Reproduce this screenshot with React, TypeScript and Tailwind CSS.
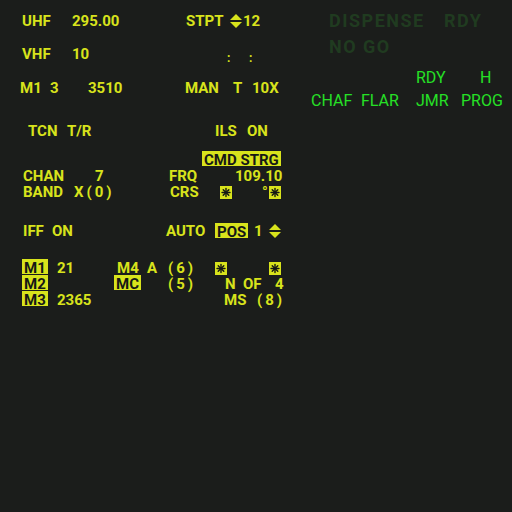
const Y = 'text-[#d8e31c]';

function Star() {
  return (
    <svg width="12" height="13" viewBox="0 0 12 13" className="block">
      <rect x="0" y="0" width="12" height="13" fill="#d8e31c" />
      <g stroke="#151715" strokeWidth="1.4" strokeLinecap="round">
        <line x1="6" y1="2.5" x2="6" y2="10.5" />
        <line x1="2" y1="6.5" x2="10" y2="6.5" />
        <line x1="3.2" y1="3.7" x2="8.8" y2="9.3" />
        <line x1="8.8" y1="3.7" x2="3.2" y2="9.3" />
      </g>
    </svg>
  );
}

function UpDown() {
  return (
    <svg width="12" height="14" viewBox="0 0 12 14" className="block">
      <polygon points="0,6 6,0 12,6" fill="#d8e31c" />
      <polygon points="0,8 12,8 6,14" fill="#d8e31c" />
    </svg>
  );
}

// highlighted (boxed) legend
function Hi({ children }: { children: React.ReactNode }) {
  return (
    <span className="bg-[#d8e31c] text-[#161816] px-[2px] pt-[3px] h-[15px] leading-[12px] inline-block self-start -mt-[1px]">
      {children}
    </span>
  );
}

export default function App() {
  return (
    <div className="w-[512px] h-[512px] bg-[#1b1d1b] flex font-[Roboto,sans-serif] font-bold text-[15px] leading-[16px] overflow-hidden">
      {/* left: radio / nav data */}
      <div className={`w-[300px] shrink-0 pt-[13px] ${Y}`}>
        <div className="flex h-[16px] items-center pl-[22px]">
          <span className="w-[50px] shrink-0">UHF</span>
          <span className="w-[114px] shrink-0">295.00</span>
          <span className="w-[44px] shrink-0">STPT</span>
          <span className="w-[13px] shrink-0"><UpDown /></span>
          <span>12</span>
        </div>
        <div className="flex h-[16px] items-center pl-[22px] mt-[17px]">
          <span className="w-[50px] shrink-0">VHF</span>
          <span className="w-[155px] shrink-0">10</span>
          <span className="w-[22px] shrink-0 text-[12px] mt-[8px]">:</span>
          <span className="text-[12px] mt-[8px]">:</span>
        </div>
        <div className="flex h-[16px] items-center pl-[20px] mt-[18px]">
          <span className="w-[30px] shrink-0">M1</span>
          <span className="w-[38px] shrink-0">3</span>
          <span className="w-[97px] shrink-0">3510</span>
          <span className="w-[48px] shrink-0">MAN</span>
          <span className="w-[19px] shrink-0">T</span>
          <span>10X</span>
        </div>
        <div className="flex h-[16px] items-center pl-[28px] mt-[27px]">
          <span className="w-[39px] shrink-0">TCN</span>
          <span className="w-[148px] shrink-0">T/R</span>
          <span className="w-[32px] shrink-0">ILS</span>
          <span>ON</span>
        </div>
        <div className="flex h-[16px] items-center pl-[202px] mt-[13px]">
          <Hi>CMD STRG</Hi>
        </div>
        <div className="flex h-[16px] items-center pl-[23px]">
          <span className="w-[72px] shrink-0">CHAN</span>
          <span className="w-[74px] shrink-0">7</span>
          <span className="w-[66px] shrink-0">FRQ</span>
          <span>109.10</span>
        </div>
        <div className="flex h-[16px] items-center pl-[23px]">
          <span className="w-[51px] shrink-0">BAND</span>
          <span className="w-[96px] shrink-0 tracking-[3px]">X(0)</span>
          <span className="w-[50px] shrink-0">CRS</span>
          <span className="w-[42px] shrink-0"><Star /></span>
          <span className="w-[7px] shrink-0 self-start">°</span>
          <span><Star /></span>
        </div>
        <div className="flex h-[16px] items-center pl-[23px] mt-[23px]">
          <span className="w-[29px] shrink-0">IFF</span>
          <span className="w-[114px] shrink-0">ON</span>
          <span className="w-[49px] shrink-0">AUTO</span>
          <span className="w-[39px] shrink-0 flex"><Hi>POS</Hi></span>
          <span className="w-[15px] shrink-0">1</span>
          <span><UpDown /></span>
        </div>
        <div className="flex h-[16px] items-center pl-[22px] mt-[21px]">
          <span className="w-[35px] shrink-0 self-stretch flex"><Hi>M1</Hi></span>
          <span className="w-[60px] shrink-0">21</span>
          <span className="w-[30px] shrink-0">M4</span>
          <span className="w-[21px] shrink-0">A</span>
          <span className="w-[47px] shrink-0 tracking-[3px]">(6)</span>
          <span className="w-[54px] shrink-0"><Star /></span>
          <span><Star /></span>
        </div>
        <div className="flex h-[16px] items-center pl-[22px]">
          <span className="w-[92px] shrink-0 self-stretch flex"><Hi>M2</Hi></span>
          <span className="w-[54px] shrink-0 self-stretch flex"><Hi>MC</Hi></span>
          <span className="w-[57px] shrink-0 tracking-[3px]">(5)</span>
          <span className="w-[18px] shrink-0">N</span>
          <span className="w-[32px] shrink-0">OF</span>
          <span>4</span>
        </div>
        <div className="flex h-[16px] items-center pl-[22px]">
          <span className="w-[35px] shrink-0 self-stretch flex"><Hi>M3</Hi></span>
          <span className="w-[167px] shrink-0">2365</span>
          <span className="w-[33px] shrink-0">MS</span>
          <span className="tracking-[3px]">(8)</span>
        </div>
      </div>

      {/* right: CMDS */}
      <div className="flex-1 pt-[12px]">
        <div className="flex h-[18px] items-center pl-[29px] text-[#203b20] text-[18px] tracking-[1.5px]">
          <span className="w-[115px] shrink-0">DISPENSE</span>
          <span>RDY</span>
        </div>
        <div className="flex h-[18px] items-center pl-[29px] mt-[8px] text-[#203b20] text-[18px] tracking-[1.5px]">
          <span>NO GO</span>
        </div>
        <div className="flex h-[16px] items-center pl-[116px] mt-[14px] text-[#26e026] font-normal text-[16px]">
          <span className="w-[64px] shrink-0">RDY</span>
          <span>H</span>
        </div>
        <div className="flex h-[16px] items-center pl-[11px] mt-[7px] text-[#26e026] font-normal text-[16px]">
          <span className="w-[50px] shrink-0">CHAF</span>
          <span className="w-[55px] shrink-0">FLAR</span>
          <span className="w-[45px] shrink-0">JMR</span>
          <span>PROG</span>
        </div>
      </div>
    </div>
  );
}
